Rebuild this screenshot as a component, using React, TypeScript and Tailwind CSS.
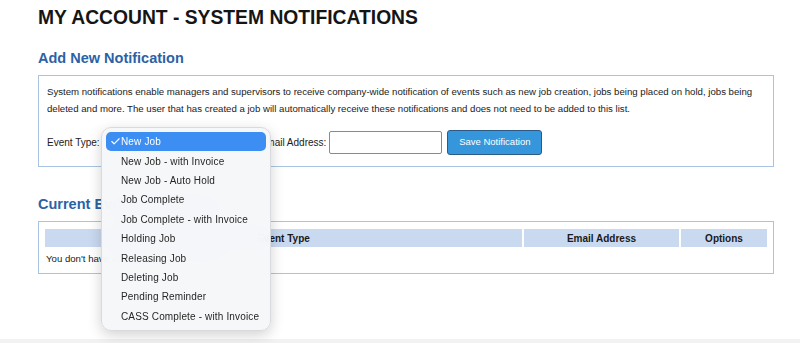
import { Check } from "lucide-react";

const eventTypes = [
  "New Job",
  "New Job - with Invoice",
  "New Job - Auto Hold",
  "Job Complete",
  "Job Complete - with Invoice",
  "Holding Job",
  "Releasing Job",
  "Deleting Job",
  "Pending Reminder",
  "CASS Complete - with Invoice",
];

function EventMenu() {
  return (
    <div className="absolute left-[101px] top-[127px] w-[170px] rounded-[10px] border border-[#d9dadd] bg-[#f6f7f9]/95 p-[4px] shadow-[0_4px_14px_rgba(0,0,0,0.18)] backdrop-blur-md">
      {eventTypes.map((t, i) => (
        <div
          key={t}
          className={
            i === 0
              ? "flex h-[19.4px] items-center whitespace-nowrap rounded-[5px] bg-[#3c8ef2] pl-[4px] text-white"
              : "flex h-[19.4px] items-center whitespace-nowrap pl-[15px] text-[#262626]"
          }
        >
          {i === 0 && <Check size={11} strokeWidth={2.5} />}
          <span className="text-[10px] tracking-[0.15px]">{t}</span>
        </div>
      ))}
    </div>
  );
}

export default function App() {
  return (
    <div className="relative h-[343px] w-[800px] overflow-hidden bg-[#f2f2f2] font-['Liberation_Sans',Arial,sans-serif]">
      <div className="h-[339px] bg-white pl-[38px] pr-[26px] pt-[6px]">
        <h1 className="text-[19.3px] font-bold leading-[24px] text-[#151515]">
          MY ACCOUNT - SYSTEM NOTIFICATIONS
        </h1>

        <h2 className="mt-[18px] text-[14.5px] font-bold leading-[20px] text-[#2c62a5]">
          Add New Notification
        </h2>
        <div className="mt-[7px] border border-[#a9c4e2] px-[8px] pt-[7px] pb-[11px]">
          <p className="text-[9.65px] leading-[17px] text-[#1a1a1a]">
            System notifications enable managers and supervisors to receive company-wide notification of events such as new job creation, jobs being placed on hold, jobs being deleted and more. The user that has created a job will automatically receive these notifications and does not need to be added to this list.
          </p>
          <div className="mt-[13px] flex items-center text-[10px] text-[#1a1a1a]">
            <span>Event Type:</span>
            <div className="ml-[6px] h-[20px] w-[145px] rounded-[4px] border border-[#b8b8b8] bg-white" />
            <span className="ml-[9px]">Email Address:</span>
            <input className="ml-[3px] h-[23px] w-[113px] rounded-[2px] border border-[#8a8a8a] bg-white outline-none" />
            <button className="ml-[5px] h-[25px] w-[95px] rounded-[3px] border border-[#2d5b86] bg-[#3596dc] text-[9.5px] text-white">
              Save Notification
            </button>
          </div>
        </div>

        <h2 className="mt-[27px] text-[14.5px] font-bold leading-[20px] text-[#2c62a5]">
          Current Event Notifications
        </h2>
        <div className="mt-[7px] border border-[#a9c4e2] px-[6px] pt-[7px] pb-[6px]">
          <div className="grid grid-cols-[1fr_155px_86px] gap-x-[2px] text-[10px] font-bold text-[#1a1a1a]">
            <div className="flex h-[18px] items-center justify-center bg-[#c9d9ef]">Event Type</div>
            <div className="flex h-[18px] items-center justify-center bg-[#c9d9ef]">Email Address</div>
            <div className="flex h-[18px] items-center justify-center bg-[#c9d9ef]">Options</div>
          </div>
          <p className="mt-[3px] pl-[1px] text-[9.65px] leading-[17px] text-[#1a1a1a]">
            You don&apos;t have any notifications to receive.
          </p>
        </div>
      </div>

      <EventMenu />
    </div>
  );
}
